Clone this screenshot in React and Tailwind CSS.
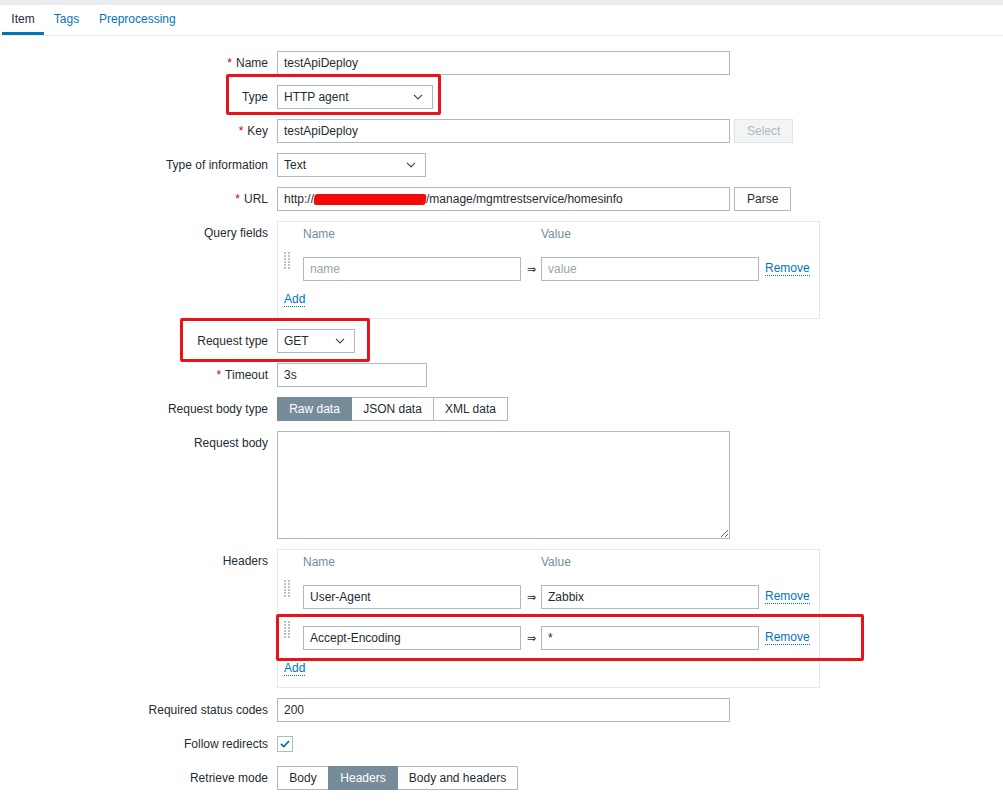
import { Fragment } from 'react';

const Req = () => <span className="text-[#d40000] mr-[4px]">*</span>;

function Label({ children, req }) {
  return (
    <div className="text-right leading-[24px] whitespace-nowrap">
      {req && <Req />}
      {children}
    </div>
  );
}

function Field({ w, children, className = '' }) {
  return (
    <div className={`h-[24px] border border-[#acbbc2] bg-white px-[6px] leading-[22px] whitespace-nowrap overflow-hidden ${w} ${className}`}>
      {children}
    </div>
  );
}

function Chevron() {
  return (
    <svg width="10" height="6" viewBox="0 0 10 6" className="shrink-0">
      <path d="M1 0.8l4 4 4-4" fill="none" stroke="#3d4a52" strokeWidth="1.2" />
    </svg>
  );
}

function Select({ w, value }) {
  return (
    <div className={`h-[24px] border border-[#acbbc2] bg-white pl-[6px] pr-[9px] flex items-center justify-between ${w}`}>
      <span>{value}</span>
      <Chevron />
    </div>
  );
}

function Btn({ children, disabled }) {
  return (
    <div
      className={`h-[24px] px-[12px] border leading-[22px] ${
        disabled ? 'bg-[#f2f4f5] border-[#dfe4e7] text-[#acbbc2]' : 'bg-white border-[#acbbc2]'
      }`}
    >
      {children}
    </div>
  );
}

function Segmented({ items, active }) {
  return (
    <div className="flex h-[24px]">
      {items.map(([t, w], i) => (
        <div
          key={t}
          className={`${w} text-center leading-[22px] border ${i > 0 ? '-ml-px' : ''} ${
            i === active ? 'bg-[#768d99] border-[#768d99] text-white relative' : 'bg-white border-[#acbbc2]'
          }`}
        >
          {t}
        </div>
      ))}
    </div>
  );
}

function Handle() {
  const ys = [1, 4, 7, 10, 13, 16];
  return (
    <svg width="7" height="18" viewBox="0 0 7 18" className="-mt-[6px]">
      {ys.map((y) => (
        <Fragment key={y}>
          <rect x="0" y={y} width="2" height="2" fill="#b8c3c8" />
          <rect x="4" y={y} width="2" height="2" fill="#b8c3c8" />
        </Fragment>
      ))}
    </svg>
  );
}

function Link({ children }) {
  return <span className="text-[#0275b8] border-b border-dotted border-[#0275b8] leading-[14px]">{children}</span>;
}

function DynTable({ rows, placeholder, rowGap }) {
  return (
    <div className="w-[543px] border border-[#e3e8ea] bg-white pl-[5px] pt-[4px] pb-[11px]">
      <div className="flex h-[16px] leading-[16px] text-[#768d99]">
        <div className="w-[20px]" />
        <div className="w-[238px]">Name</div>
        <div>Value</div>
      </div>
      <div className={`mt-[15px] flex flex-col ${rowGap}`}>
        {rows.map(([n, v], i) => (
          <div key={i} className="flex items-start h-[24px]">
            <div className="w-[20px] pl-px">
              <Handle />
            </div>
            <Field w="w-[218px]" className={placeholder ? 'text-[#9aa6ac]' : ''}>{n}</Field>
            <div className="w-[20px] text-center leading-[24px] text-[11px]">⇒</div>
            <Field w="w-[218px]" className={placeholder ? 'text-[#9aa6ac]' : ''}>{v}</Field>
            <div className="ml-[6px] leading-[22px]">
              <Link>Remove</Link>
            </div>
          </div>
        ))}
      </div>
      <div className="mt-[10px] h-[16px] leading-[16px] pl-px">
        <Link>Add</Link>
      </div>
    </div>
  );
}

function Checkbox() {
  return (
    <div className="h-[24px] flex items-center">
      <div className="w-[16px] h-[16px] border border-[#acbbc2] bg-white flex items-center justify-center">
        <svg width="10" height="8" viewBox="0 0 10 8">
          <polyline points="1,4 3.8,6.6 9,1.2" fill="none" stroke="#0275b8" strokeWidth="1.8" />
        </svg>
      </div>
    </div>
  );
}

function Mark({ className }) {
  return <div className={`absolute border-[3px] border-[#e8141c] rounded-[2px] pointer-events-none ${className}`} />;
}

export default function App() {
  return (
    <div className="relative w-[1003px] h-[801px] overflow-hidden bg-white text-[12px] text-[#1f2c33] font-['Liberation_Sans',Arial,sans-serif]">
      <div className="h-[5px] bg-[#ebeef0]" />
      <div className="flex h-[31px] border-b border-[#ebeef0] pl-[2px]">
        <div className="w-[42px] text-center leading-[28px] border-b-[3px] border-[#0275b8]">Item</div>
        <div className="w-[45px] text-center leading-[28px] text-[#0275b8]">Tags</div>
        <div className="px-[10px] leading-[28px] text-[#0275b8]">Preprocessing</div>
      </div>

      <div className="grid grid-cols-[268px_1fr] gap-x-[9px] gap-y-[10px] pt-[15px]">
        <Label req>Name</Label>
        <Field w="w-[453px]">testApiDeploy</Field>

        <Label>Type</Label>
        <Select w="w-[156px]" value="HTTP agent" />

        <Label req>Key</Label>
        <div className="flex gap-[4px]">
          <Field w="w-[453px]">testApiDeploy</Field>
          <Btn disabled>Select</Btn>
        </div>

        <Label>Type of information</Label>
        <Select w="w-[149px]" value="Text" />

        <Label req>URL</Label>
        <div className="flex gap-[4px]">
          <Field w="w-[453px]" className="flex items-center">
            <span>http://</span>
            <span className="inline-block w-[112px] h-[11px] bg-[#f20a0a] rounded-[3px] -skew-x-6" />
            <span>/manage/mgmtrestservice/homesinfo</span>
          </Field>
          <Btn>Parse</Btn>
        </div>

        <Label>Query fields</Label>
        <DynTable rows={[['name', 'value']]} placeholder rowGap="gap-[18px]" />

        <Label>Request type</Label>
        <Select w="w-[78px]" value="GET" />

        <Label req>Timeout</Label>
        <Field w="w-[150px]">3s</Field>

        <Label>Request body type</Label>
        <Segmented
          items={[
            ['Raw data', 'w-[75px]'],
            ['JSON data', 'w-[83px]'],
            ['XML data', 'w-[75px]'],
          ]}
          active={0}
        />

        <Label>Request body</Label>
        <textarea
          readOnly
          className="block w-[453px] h-[108px] border border-[#acbbc2] bg-white resize"
        />

        <Label>Headers</Label>
        <DynTable
          rows={[
            ['User-Agent', 'Zabbix'],
            ['Accept-Encoding', '*'],
          ]}
          rowGap="gap-[17px]"
        />

        <Label>Required status codes</Label>
        <Field w="w-[453px]">200</Field>

        <Label>Follow redirects</Label>
        <Checkbox />

        <Label>Retrieve mode</Label>
        <Segmented
          items={[
            ['Body', 'w-[52px]'],
            ['Headers', 'w-[70px]'],
            ['Body and headers', 'w-[121px]'],
          ]}
          active={1}
        />
      </div>

      <Mark className="left-[226px] top-[74px] w-[215px] h-[41px]" />
      <Mark className="left-[180px] top-[318px] w-[190px] h-[44px]" />
      <Mark className="left-[276px] top-[614px] w-[588px] h-[47px]" />
    </div>
  );
}
